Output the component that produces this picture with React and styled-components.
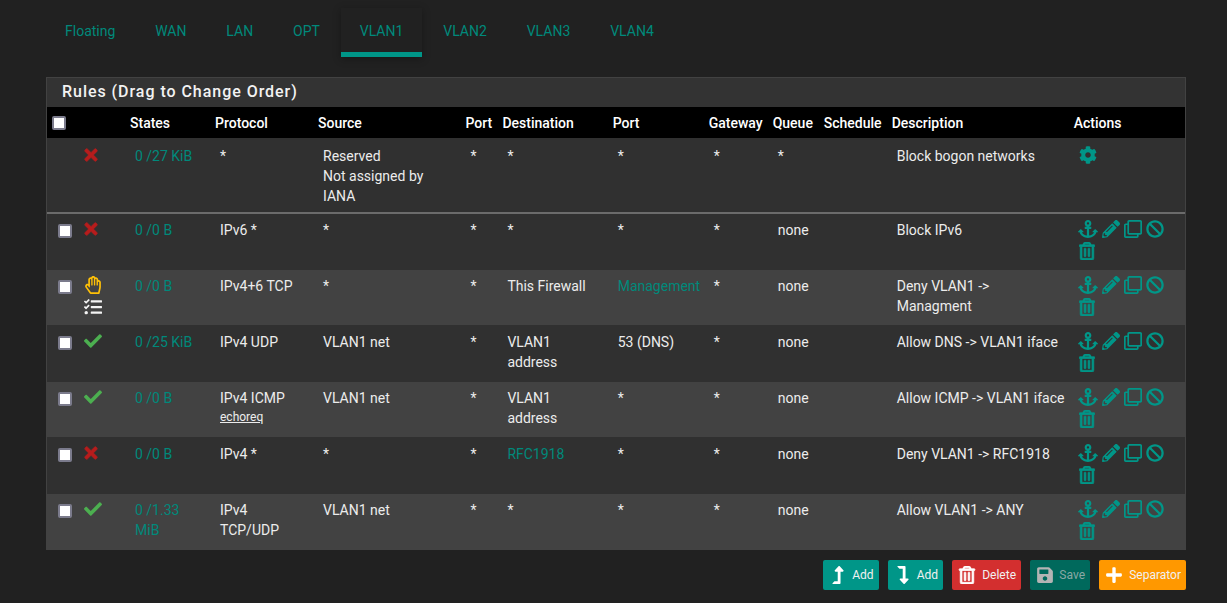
import React from 'react'
import styled, { createGlobalStyle } from 'styled-components'
import {
  FaAnchor,
  FaBan,
  FaCheck,
  FaCog,
  FaLevelDownAlt,
  FaLevelUpAlt,
  FaPencilAlt,
  FaPlus,
  FaRegClone,
  FaRegHandPaper,
  FaRegTrashAlt,
  FaSave,
  FaTasks,
  FaTimes,
} from 'react-icons/fa'

const TABS = ['Floating', 'WAN', 'LAN', 'OPT', 'VLAN1', 'VLAN2', 'VLAN3', 'VLAN4']

const COLUMNS = [
  ['check', 32],
  ['', 51],
  ['States', 85],
  ['Protocol', 103],
  ['Source', 147.4],
  ['Port', 37],
  ['Destination', 110.3],
  ['Port', 96],
  ['Gateway', 64],
  ['Queue', 51],
  ['Schedule', 68],
  ['Description', 182],
  ['Actions', 111.3],
]

const RULES = [
  { height: 57, top: 6, status: 'block', states: '0 /0 B', protocol: 'IPv6 *', source: '*', port: '*', dest: '*', dport: '*', queue: 'none', description: 'Block IPv6' },
  { height: 55, top: 6, status: 'reject', states: '0 /0 B', protocol: 'IPv4+6 TCP', source: '*', port: '*', dest: 'This Firewall', dport: 'Management', dportLink: true, queue: 'none', description: 'Deny VLAN1 -> Managment' },
  { height: 57, top: 7, status: 'pass', states: '0 /25 KiB', protocol: 'IPv4 UDP', source: 'VLAN1 net', port: '*', dest: 'VLAN1 address', dport: '53 (DNS)', queue: 'none', description: 'Allow DNS -> VLAN1 iface' },
  { height: 55, top: 6, status: 'pass', states: '0 /0 B', protocol: 'IPv4 ICMP', sub: 'echoreq', source: 'VLAN1 net', port: '*', dest: 'VLAN1 address', dport: '*', queue: 'none', description: 'Allow ICMP -> VLAN1 iface' },
  { height: 57, top: 7, status: 'block', states: '0 /0 B', protocol: 'IPv4 *', source: '*', port: '*', dest: 'RFC1918', destLink: true, dport: '*', queue: 'none', description: 'Deny VLAN1 -> RFC1918' },
  { height: 56, top: 6, status: 'pass', states: '0 /1.33 MiB', protocol: 'IPv4 TCP/UDP', source: 'VLAN1 net', port: '*', dest: '*', dport: '*', queue: 'none', description: 'Allow VLAN1 -> ANY' },
]

const Global = createGlobalStyle`
  html, body {
    margin: 0;
    background: #212121;
    color: #e8e8e8;
    font-family: Roboto, "Liberation Sans", sans-serif;
    font-size: 14px;
    line-height: 20px;
  }
`

const Page = styled.div`
  box-sizing: border-box;
  width: 1227px;
  height: 603px;
  padding: 8px 41px 0 46px;
  overflow: hidden;
`

const TabBar = styled.nav`
  display: flex;
  gap: 1.9px;
  height: 49px;
  margin-bottom: 20px;
`

const Tab = styled.a`
  box-sizing: border-box;
  height: 49px;
  padding: 13px 19px 0;
  color: #00897b;
  border-bottom: ${p => (p.$active ? '5px solid #009688' : 'none')};
  box-shadow: ${p => (p.$active ? '0 2px 8px rgba(0, 0, 0, 0.3)' : 'none')};
`

const Panel = styled.section`
  background: #333;
  border: 1px solid #424242;
  border-bottom: none;
`

const PanelTitle = styled.h2`
  margin: 0;
  height: 29px;
  padding-left: 15px;
  font-size: 16px;
  font-weight: 500;
  line-height: 27px;
  letter-spacing: 0.96px;
  color: #f2f2f2;
`

const Table = styled.table`
  width: 100%;
  table-layout: fixed;
  border-collapse: collapse;
`

const HeadRow = styled.tr`
  height: 31px;
  background: #000;
`

const Th = styled.th`
  padding: 0 0 0 ${p => (p.$first ? '5px' : '0')};
  text-align: left;
  font-weight: 500;
  color: #fff;
  white-space: nowrap;
`

const Row = styled.tr`
  height: ${p => p.$height}px;
  background: ${p => (p.$alt ? '#424242' : '#303030')};
  border-bottom: ${p => (p.$separator ? '2px solid #6b6b6b' : 'none')};
`

const Td = styled.td`
  box-sizing: border-box;
  padding: ${p => p.$top}px 9px 0 5px;
  vertical-align: top;
  color: #ececec;
  overflow: hidden;
`

const StatesCell = styled(Td)`
  color: #00897b;
`

const RowLink = styled.a`
  color: #00897b;
`

const SubLink = styled.a`
  display: block;
  font-size: 12px;
  line-height: 18px;
  text-decoration: underline;
  color: #ececec;
`

const CheckBox = styled.span`
  display: block;
  box-sizing: border-box;
  width: 14px;
  height: 14px;
  margin: ${p => (p.$head ? '0' : '4px 0 0 6px')};
  background: #fff;
  border: 2px solid #7b7b8c;
  border-radius: 2px;
`

const StatusIcons = styled.div`
  display: flex;
  flex-direction: column;
  align-items: flex-start;
  gap: 4px;
  margin-left: ${p => p.$shift || 0}px;
  font-size: 18px;
  line-height: 0;
  color: ${p => p.$color};
`

const TaskIcon = styled(FaTasks)`
  color: #f4f4f4;
`

const BoldTimes = styled(FaTimes)`
  stroke-width: 24;
`

const Actions = styled.div`
  display: flex;
  flex-wrap: wrap;
  gap: 2px 4px;
  width: 90px;
  margin-top: -1px;
  color: #009688;
  font-size: 18px;
  line-height: 0;
`

const ActionIcon = styled.span`
  display: inline-flex;
  justify-content: center;
  width: ${p => p.$width || 18}px;
  height: 20px;
  align-items: center;
`

const AnchorIcon = styled(FaAnchor)`
  flex-shrink: 0;
  font-size: 20px;
`

const BoldTrash = styled(FaRegTrashAlt)`
  stroke-width: 22;
`

const Footer = styled.div`
  display: flex;
  justify-content: flex-end;
  gap: 9px;
  margin-top: 10px;
`

const Button = styled.button`
  display: flex;
  align-items: center;
  justify-content: space-between;
  box-sizing: border-box;
  width: ${p => p.$width}px;
  height: 30px;
  padding: 0 5px 0 6px;
  border: none;
  border-radius: 2px;
  background: ${p => p.$bg};
  color: ${p => p.$fg || '#f1f1f1'};
  font-family: Roboto, "Liberation Sans", sans-serif;
  font-size: 12px;

  svg {
    font-size: 18px;
    color: ${p => p.$icon || '#fff'};
  }
`

const Status = ({ type }) => {
  if (type === 'pass') {
    return (
      <StatusIcons $color="#4caf50">
        <FaCheck />
      </StatusIcons>
    )
  }
  if (type === 'reject') {
    return (
      <StatusIcons $color="#ffc107">
        <FaRegHandPaper />
        <TaskIcon />
      </StatusIcons>
    )
  }
  return (
    <StatusIcons $color="#b71c1c" $shift={-2}>
      <BoldTimes />
    </StatusIcons>
  )
}

const RowActions = () => (
  <Actions>
    <ActionIcon $width={19}>
      <AnchorIcon />
    </ActionIcon>
    <ActionIcon>
      <FaPencilAlt />
    </ActionIcon>
    <ActionIcon>
      <FaRegClone />
    </ActionIcon>
    <ActionIcon>
      <FaBan />
    </ActionIcon>
    <ActionIcon $width={16}>
      <BoldTrash />
    </ActionIcon>
  </Actions>
)

const App = () => (
  <Page>
    <Global />
    <TabBar>
      {TABS.map(tab => (
        <Tab key={tab} $active={tab === 'VLAN1'}>
          {tab}
        </Tab>
      ))}
    </TabBar>

    <Panel>
      <PanelTitle>Rules (Drag to Change Order)</PanelTitle>
      <Table>
        <colgroup>
          {COLUMNS.map(([name, width], i) => (
            <col key={i} style={{ width }} />
          ))}
        </colgroup>
        <thead>
          <HeadRow>
            {COLUMNS.map(([name], i) => (
              <Th key={i} $first={i === 0}>
                {name === 'check' ? <CheckBox $head /> : name}
              </Th>
            ))}
          </HeadRow>
        </thead>
        <tbody>
          <Row $height={75} $separator>
            <Td $top={8} />
            <Td $top={8}>
              <Status type="block" />
            </Td>
            <StatesCell $top={8}>0 /27 KiB</StatesCell>
            <Td $top={8}>*</Td>
            <Td $top={8}>
              Reserved
              <br />
              Not assigned by IANA
            </Td>
            <Td $top={8}>*</Td>
            <Td $top={8}>*</Td>
            <Td $top={8}>*</Td>
            <Td $top={8}>*</Td>
            <Td $top={8}>*</Td>
            <Td $top={8} />
            <Td $top={8}>Block bogon networks</Td>
            <Td $top={8}>
              <Actions>
                <ActionIcon>
                  <FaCog />
                </ActionIcon>
              </Actions>
            </Td>
          </Row>
          {RULES.map((rule, i) => (
            <Row key={rule.description} $height={rule.height} $alt={i % 2 === 1}>
              <Td $top={rule.top}>
                <CheckBox />
              </Td>
              <Td $top={rule.top}>
                <Status type={rule.status} />
              </Td>
              <StatesCell $top={rule.top}>{rule.states}</StatesCell>
              <Td $top={rule.top}>
                {rule.protocol}
                {rule.sub && <SubLink>{rule.sub}</SubLink>}
              </Td>
              <Td $top={rule.top}>{rule.source}</Td>
              <Td $top={rule.top}>{rule.port}</Td>
              <Td $top={rule.top}>{rule.destLink ? <RowLink>{rule.dest}</RowLink> : rule.dest}</Td>
              <Td $top={rule.top}>{rule.dportLink ? <RowLink>{rule.dport}</RowLink> : rule.dport}</Td>
              <Td $top={rule.top}>*</Td>
              <Td $top={rule.top}>{rule.queue}</Td>
              <Td $top={rule.top} />
              <Td $top={rule.top}>{rule.description}</Td>
              <Td $top={rule.top}>
                <RowActions />
              </Td>
            </Row>
          ))}
        </tbody>
      </Table>
    </Panel>

    <Footer>
      <Button $width={55.4} $bg="#009688">
        <FaLevelUpAlt />
        Add
      </Button>
      <Button $width={55.4} $bg="#009688">
        <FaLevelDownAlt />
        Add
      </Button>
      <Button $width={69} $bg="#d32f2f">
        <BoldTrash />
        Delete
      </Button>
      <Button $width={60} $bg="#00695c" $fg="#8aa8a4" $icon="#b4b4b4">
        <FaSave />
        Save
      </Button>
      <Button $width={87} $bg="#ff9800">
        <FaPlus />
        Separator
      </Button>
    </Footer>
  </Page>
)

export default App
